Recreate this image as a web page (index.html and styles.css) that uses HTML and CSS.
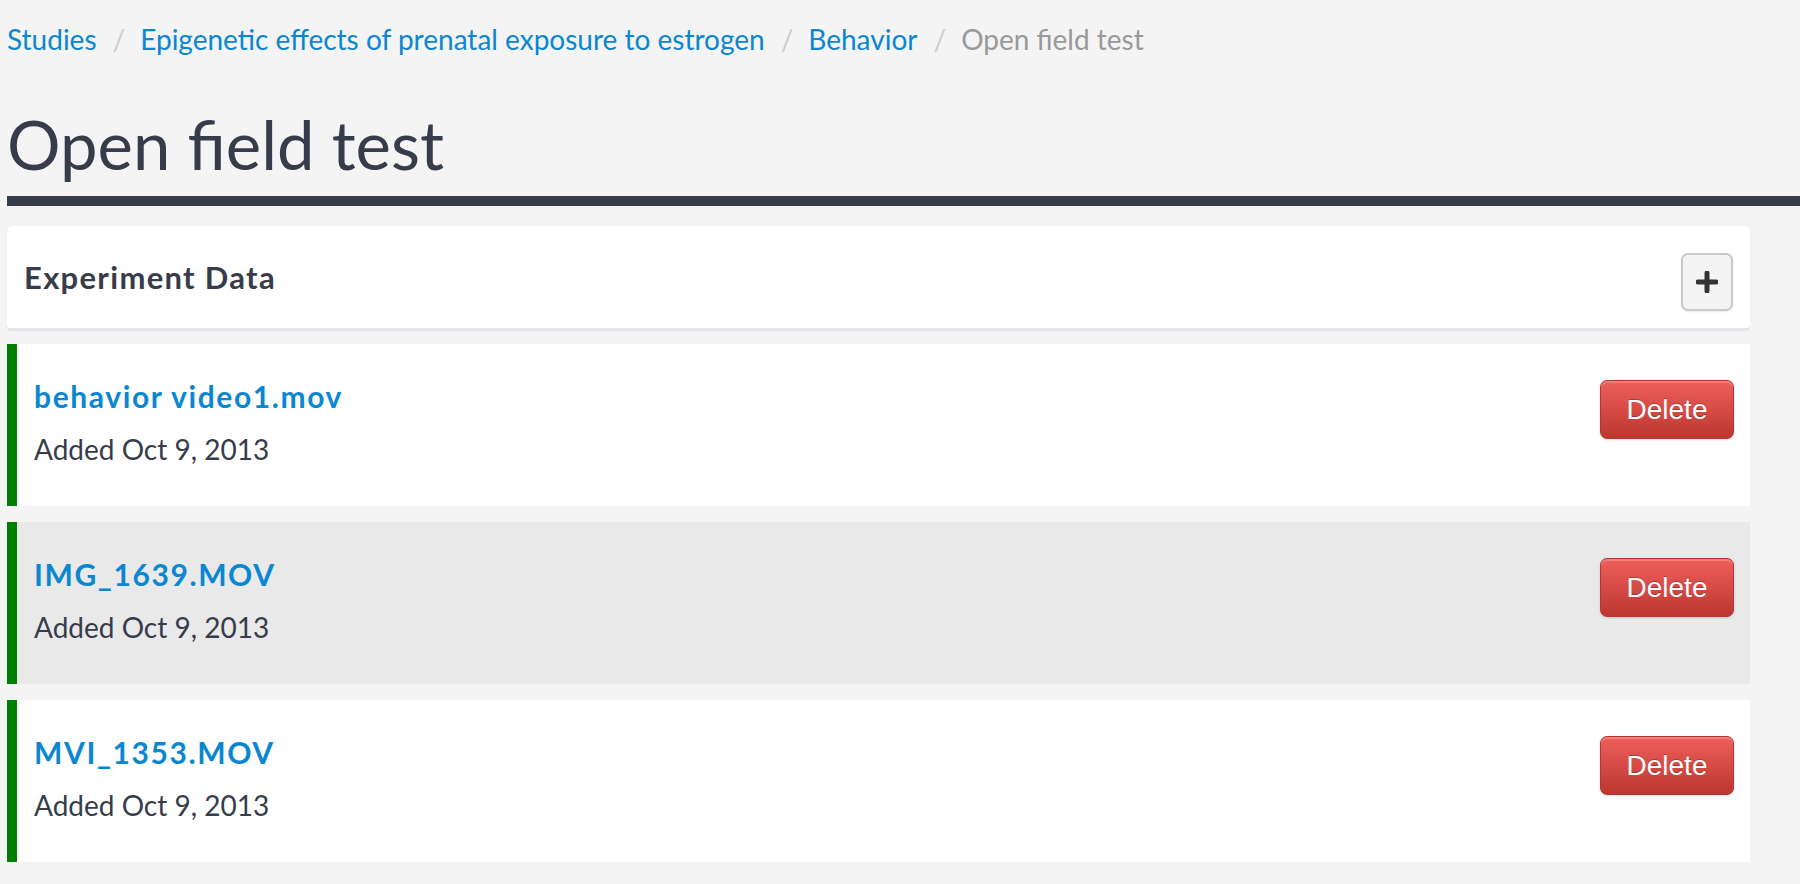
FILE: index.html
```html
<!DOCTYPE html>
<html lang="en">
<head>
<meta charset="utf-8">
<title>Open field test</title>
<link rel="stylesheet" href="styles.css">
</head>
<body>
<div class="page">
  <nav class="breadcrumb">
    <a href="#">Studies</a><span class="sep">/</span><a href="#">Epigenetic effects of prenatal exposure to estrogen</a><span class="sep">/</span><a href="#">Behavior</a><span class="sep">/</span><span class="active">Open field test</span>
  </nav>
  <h1 class="title">Open field test</h1>
  <div class="title-bar"></div>
  <div class="content">
    <div class="panel">
      <h3 class="panel-title">Experiment Data</h3>
      <button class="btn-add" aria-label="Add">
        <svg width="22" height="22" viewBox="0 0 22 22"><path d="M11 2v18M2 11h18" stroke="#333" stroke-width="5" stroke-linecap="round"/></svg>
      </button>
    </div>
    <div class="item">
      <div class="item-info">
        <a class="item-name" href="#">behavior video1.mov</a>
        <div class="item-date">Added Oct 9, 2013</div>
      </div>
      <button class="btn-delete">Delete</button>
    </div>
    <div class="item item-hover">
      <div class="item-info">
        <a class="item-name" href="#">IMG_1639.MOV</a>
        <div class="item-date">Added Oct 9, 2013</div>
      </div>
      <button class="btn-delete">Delete</button>
    </div>
    <div class="item">
      <div class="item-info">
        <a class="item-name" href="#">MVI_1353.MOV</a>
        <div class="item-date">Added Oct 9, 2013</div>
      </div>
      <button class="btn-delete">Delete</button>
    </div>
  </div>
</div>
</body>
</html>
```

FILE: styles.css
```css
html, body {
  margin: 0;
  padding: 0;
  background: #f4f4f4;
}
body {
  font-family: Lato, "Open Sans", sans-serif;
  color: #363c4a;
  overflow: hidden;
}
.page {
  padding-left: 7px;
}
.breadcrumb {
  padding-top: 21px;
  font-size: 28px;
  line-height: 36px;
  height: 36px;
  white-space: nowrap;
}
.breadcrumb a {
  color: #0a87d0;
  text-decoration: none;
}
.breadcrumb .sep {
  color: #cccccc;
  margin: 0 15px 0 16px;
}
.breadcrumb .active {
  color: #999999;
}
.title {
  margin: 47px 0 0 0;
  font-size: 67px;
  line-height: 80px;
  font-weight: 400;
  color: #363c4a;
}
.title-bar {
  margin-top: 12px;
  height: 10px;
  background: #363c4a;
}
.content {
  width: 1743px;
}
.panel {
  margin-top: 20px;
  height: 102px;
  background: #fff;
  border-radius: 5px;
  border-bottom: 3px solid #e3e5ea;
  box-shadow: 0 0 1px rgba(0,0,0,0.12);
  display: flex;
  align-items: center;
  justify-content: space-between;
  padding: 0 17px 0 17px;
}
.panel-title {
  margin: 0;
  font-size: 31px;
  line-height: 36px;
  font-weight: 700;
  letter-spacing: 1.3px;
  color: #363c4a;
}
.btn-add {
  margin-top: 10px;
  width: 52px;
  height: 58px;
  background: #f4f4f4;
  border: 2px solid #c9c9c9;
  border-radius: 7px;
  box-shadow: 0 1px 2px rgba(0,0,0,0.08);
  display: flex;
  align-items: center;
  justify-content: center;
  padding: 0;
}
.item {
  margin-top: 13px;
  height: 162px;
  box-sizing: border-box;
  background: #fff;
  border-left: 10px solid #008000;
  padding: 36px 16px 0 17px;
  display: flex;
  justify-content: space-between;
  align-items: flex-start;
}
.item + .item {
  margin-top: 16px;
}
.item-hover {
  background: #e9e9e9;
}
.item-name {
  display: block;
  margin-top: -1px;
  font-size: 30px;
  line-height: 34px;
  font-weight: 700;
  letter-spacing: 1.6px;
  color: #0a87d0;
  text-decoration: none;
}
.item-date {
  margin-top: 20px;
  font-size: 28px;
  line-height: 32px;
  color: #363c4a;
}
.btn-delete {
  width: 134px;
  height: 59px;
  box-sizing: border-box;
  padding: 0;
  font-family: "Liberation Sans", Arial, sans-serif;
  font-size: 28px;
  line-height: 57px;
  color: #fff;
  text-shadow: 0 -1px 0 rgba(0,0,0,0.25);
  background: linear-gradient(to bottom, #ee5f5b, #bd362f);
  border: 1px solid #b3362f;
  border-radius: 7px;
  box-shadow: inset 0 2px 0 rgba(255,255,255,0.2), 0 1px 3px rgba(0,0,0,0.12);
}
```
